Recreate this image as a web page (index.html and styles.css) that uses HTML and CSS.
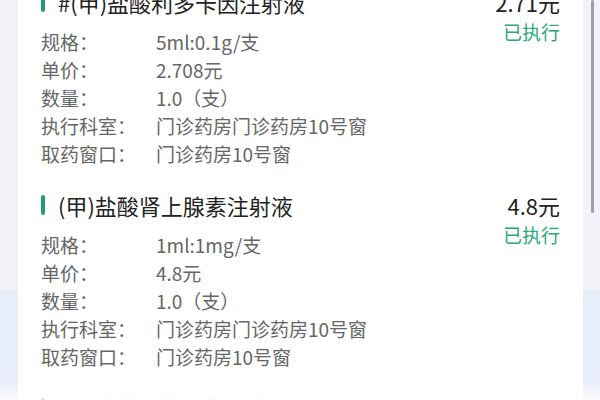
FILE: index.html
```html
<!DOCTYPE html>
<html lang="zh-CN">
<head>
<meta charset="utf-8">
<link rel="stylesheet" href="styles.css">
</head>
<body>
<div class="page">
  <div class="card">
    <div class="item">
      <div class="left">
        <div class="title-row"><span class="bar"></span><span class="title">#(甲)盐酸利多卡因注射液</span></div>
        <div class="row"><span class="label">规格：</span><span class="value">5ml:0.1g/支</span></div>
        <div class="row"><span class="label">单价：</span><span class="value">2.708元</span></div>
        <div class="row"><span class="label">数量：</span><span class="value">1.0（支）</span></div>
        <div class="row"><span class="label">执行科室：</span><span class="value">门诊药房门诊药房10号窗</span></div>
        <div class="row"><span class="label">取药窗口：</span><span class="value">门诊药房10号窗</span></div>
      </div>
      <div class="right">
        <div class="price">2.71元</div>
        <div class="status">已执行</div>
      </div>
    </div>
    <div class="item">
      <div class="left">
        <div class="title-row"><span class="bar"></span><span class="title">(甲)盐酸肾上腺素注射液</span></div>
        <div class="row"><span class="label">规格：</span><span class="value">1ml:1mg/支</span></div>
        <div class="row"><span class="label">单价：</span><span class="value">4.8元</span></div>
        <div class="row"><span class="label">数量：</span><span class="value">1.0（支）</span></div>
        <div class="row"><span class="label">执行科室：</span><span class="value">门诊药房门诊药房10号窗</span></div>
        <div class="row"><span class="label">取药窗口：</span><span class="value">门诊药房10号窗</span></div>
      </div>
      <div class="right">
        <div class="price">4.8元</div>
        <div class="status">已执行</div>
      </div>
    </div>
    <div class="item">
      <div class="left">
        <div class="title-row"><span class="bar"></span><span class="title">(乙)注射用盐酸氨溴索</span></div>
      </div>
      <div class="right">
        <div class="price">12.35元</div>
      </div>
    </div>
  </div>
</div>
<div class="fade"></div>
<div class="scrollbar"></div>
</body>
</html>
```
FILE: styles.css
```css
html, body {
  margin: 0;
  padding: 0;
}
body {
  width: 600px;
  height: 400px;
  overflow: hidden;
  position: relative;
  background: linear-gradient(to bottom, #f1f3f8 0, #f1f3f8 290px, #e7edf9 290px, #e7edf9 100%);
  font-family: "Noto Sans CJK SC", "Noto Sans", sans-serif;
}
.page {
  padding: 0 17px 0 18px;
  margin-top: -14px;
}
.card {
  background: #ffffff;
  padding: 0 23px;
}
.item {
  display: flex;
  justify-content: space-between;
  padding-bottom: 21px;
}
.title-row {
  display: flex;
  align-items: center;
  height: 32px;
  margin-bottom: 10px;
  font-size: 22px;
  color: #222222;
  white-space: nowrap;
}
.bar {
  width: 4px;
  height: 20px;
  border-radius: 2px;
  background: #1f9f6f;
  margin-right: 13px;
  flex: none;
}
.row {
  display: flex;
  line-height: 28px;
  font-size: 19px;
  color: #666666;
  white-space: nowrap;
}
.label {
  width: 115px;
  flex: none;
}
.right {
  text-align: right;
}
.price {
  font-size: 22px;
  line-height: 32px;
  color: #222222;
}
.status {
  font-size: 19px;
  line-height: 28px;
  color: #2fa880;
}
.fade {
  position: absolute;
  left: 0;
  right: 0;
  bottom: 0;
  height: 18px;
  background: linear-gradient(to bottom, rgba(255,255,255,0), rgba(255,255,255,0.85));
}
.scrollbar {
  position: absolute;
  left: 591px;
  top: 0;
  width: 3px;
  height: 213px;
  border-radius: 2px;
  background: #9ca0a9;
}
```
